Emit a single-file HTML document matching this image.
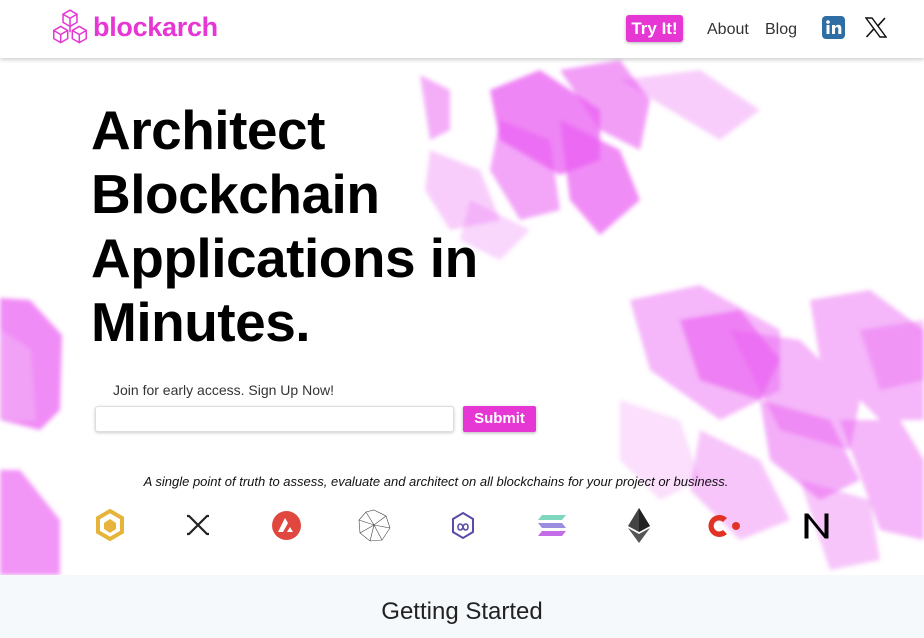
<!DOCTYPE html>
<html><head><meta charset="utf-8"><style>
*{margin:0;padding:0;box-sizing:border-box}
body{width:924px;height:638px;overflow:hidden;background:#fff;font-family:"Liberation Sans",sans-serif;position:relative}
.hdr{position:absolute;top:0;left:0;width:924px;height:58px;background:#fff;box-shadow:0 2px 4px rgba(0,0,0,.18);z-index:5}
.logo{position:absolute;left:93px;top:12px;font-size:27px;font-weight:bold;color:#e636d3;letter-spacing:-0.3px}
.try{position:absolute;left:626px;top:15px;width:57px;height:27px;background:#e636d3;color:#fff;font-weight:bold;font-size:17px;text-align:center;line-height:27px;border-radius:3px;box-shadow:0 1px 3px rgba(0,0,0,.3)}
.nav{position:absolute;top:21px;font-size:16px;color:#333}
.bg{position:absolute;left:0;top:58px;z-index:0}
h1{position:absolute;left:91px;top:98px;font-size:55px;line-height:64px;font-weight:bold;color:#000;z-index:2;letter-spacing:-0.5px}
.join{position:absolute;left:113px;top:382px;font-size:14px;color:#333;z-index:2}
.inp{position:absolute;left:95px;top:406px;width:359px;height:26px;border:1px solid #ddd;border-radius:3px;background:#fff;box-shadow:0 1px 3px rgba(0,0,0,.2);z-index:2}
.sub{position:absolute;left:463px;top:406px;width:73px;height:26px;background:#e636d3;color:#fff;font-weight:bold;font-size:15px;text-align:center;line-height:26px;border-radius:2px;box-shadow:0 1px 3px rgba(0,0,0,.3);z-index:2}
.tag{position:absolute;left:0;width:872px;text-align:center;top:474px;font-size:13px;font-style:italic;color:#111;z-index:2}
.gs{position:absolute;left:0;top:575px;width:924px;height:63px;background:#f5f9fc;text-align:center;font-size:24px;color:#222;padding-top:23px;z-index:3}
.ic{position:absolute;top:509px;z-index:2}
</style></head><body>
<svg class="bg" width="924" height="517" viewBox="0 58 924 517">
<defs><filter id="b"><feGaussianBlur stdDeviation="2"/></filter></defs>
<g filter="url(#b)" fill="#e95df2">
<polygon points="490,90 540,70 600,110 600,160 560,175 500,140" opacity=".75"/>
<polygon points="560,70 620,60 650,100 640,150 600,130" opacity=".6"/>
<polygon points="500,120 550,140 560,210 520,220 490,170" opacity=".55"/>
<polygon points="560,120 620,150 640,200 600,235 570,200" opacity=".7"/>
<polygon points="420,75 450,90 450,130 430,140" opacity=".5"/>
<polygon points="430,150 480,170 500,220 450,230 425,190" opacity=".3"/>
<polygon points="620,80 700,70 760,110 720,140" opacity=".3"/>
<polygon points="470,200 530,230 500,260 460,240" opacity=".25"/>
<polygon points="630,300 700,285 780,330 780,390 720,420 650,370" opacity=".45"/>
<polygon points="680,320 740,310 780,360 760,400 700,380" opacity=".6"/>
<polygon points="730,330 800,340 860,400 850,450 780,430" opacity=".45"/>
<polygon points="810,300 870,290 924,330 924,420 880,420 820,360" opacity=".45"/>
<polygon points="760,400 830,420 860,480 820,500 770,460" opacity=".5"/>
<polygon points="840,420 900,420 924,460 924,540 880,530" opacity=".45"/>
<polygon points="700,430 760,460 790,520 740,540 690,490" opacity=".35"/>
<polygon points="620,400 680,420 700,480 660,500 620,460" opacity=".2"/>
<polygon points="860,330 924,320 924,380 880,390" opacity=".35"/>
<polygon points="800,480 870,500 880,560 830,570" opacity=".35"/>
<polygon points="0,298 30,300 62,335 60,410 40,430 0,420" opacity=".7"/>
<polygon points="0,470 20,470 60,520 60,575 0,575" opacity=".65"/>
<polygon points="0,330 30,350 35,420 0,420" fill="#f3b0f7" opacity=".6"/>
</g>
</svg>
<div class="hdr">
<svg style="position:absolute;left:51px;top:9px" width="38" height="36" viewBox="2 0 32 31" fill="none" stroke="#e636d3" stroke-width="1.3">
<path d="M18 1l6 3.5v7L18 15l-6-3.5v-7z M12 4.5l6 3.5 6-3.5 M18 8v7"/>
<path d="M10 15l6 3.5v7L10 29l-6-3.5v-7z M4 18.5l6 3.5 6-3.5 M10 22v7"/>
<path d="M26 15l6 3.5v7L26 29l-6-3.5v-7z M20 18.5l6 3.5 6-3.5 M26 22v7"/>
<path d="M18 15v5"/>
</svg>
<div class="logo">blockarch</div>
<div class="try">Try It!</div>
<div class="nav" style="left:707px">About</div>
<div class="nav" style="left:765px">Blog</div>
<svg style="position:absolute;left:822px;top:16px" width="23" height="23" viewBox="0 0 23 23"><rect width="23" height="23" rx="4" fill="#2f6ea5"/><rect x="4.5" y="9" width="3" height="9" fill="#fff"/><circle cx="6" cy="6" r="1.8" fill="#fff"/><path d="M10 9h3v1.5c.8-1.2 2-1.8 3.3-1.8 2 0 3 1.3 3 3.8V18h-3v-5c0-1.2-.4-1.9-1.4-1.9S13 11.8 13 13v5h-3z" fill="#fff"/></svg>
<svg style="position:absolute;left:865px;top:17px" width="22" height="21" viewBox="0 0 22 21"><path d="M1 1h6l14 19h-6z" fill="none" stroke="#111" stroke-width="1.4"/><path d="M20 1L12.5 9.3M1.5 20l7.7-8.5" stroke="#111" stroke-width="1.6"/></svg>
</div>
<h1>Architect<br>Blockchain<br>Applications in<br>Minutes.</h1>
<div class="join">Join for early access. Sign Up Now!</div>
<div class="inp"></div>
<div class="sub">Submit</div>
<div class="tag">A single point of truth to assess, evaluate and architect on all blockchains for your project or business.</div>
<svg class="ic" style="left:95px" width="30" height="32" viewBox="0 0 30 32"><path d="M15 2l12 7v14l-12 7-12-7V9z" fill="none" stroke="#e6b43a" stroke-width="4"/><path d="M15 10l6 4v6l-6 4-6-4v-6z" fill="#e6b43a"/></svg>
<svg class="ic" style="left:185px;top:514px" width="26" height="22" viewBox="0 0 26 22"><path d="M2 2h2l18 18h2M2 20h2L22 2h2" fill="none" stroke="#222" stroke-width="2.2" stroke-linejoin="round"/></svg>
<svg class="ic" style="left:272px;top:511px" width="29" height="29" viewBox="0 0 29 29"><circle cx="14.5" cy="14.5" r="14.5" fill="#e0483f"/><path d="M13 7L6 21h5l5-9z M18 16l-3 5h6z" fill="#fff"/></svg>
<svg class="ic" style="left:358px;top:509px" width="33" height="33" viewBox="0 0 33 33" fill="none" stroke="#444" stroke-width=".6"><path d="M16 1l12 6 4 12-8 12-12 1L2 24 1 11 8 3z M8 3l8 13 12-9 M1 11l15 5 16 3 M2 24l14-8 8 15 M12 32l4-16"/></svg>
<svg class="ic" style="left:450px;top:511px" width="26" height="29" viewBox="0 0 26 29"><path d="M13 2l10 6v13l-10 6-10-6V8z" fill="none" stroke="#5b4ba8" stroke-width="2"/><path d="M8 16c0-4 4-4 5 0s5 4 5 0-4-4-5 0-5 4-5 0z" fill="none" stroke="#5b4ba8" stroke-width="1.6"/></svg>
<svg class="ic" style="left:538px;top:515px" width="28" height="22" viewBox="0 0 28 22"><path d="M4 0h24l-4 5H0z" fill="#7fd7c0"/><path d="M0 8h24l4 5H4z" fill="#9b8ee0"/><path d="M4 16h24l-4 5H0z" fill="#c56ce8"/></svg>
<svg class="ic" style="left:628px;top:508px" width="22" height="35" viewBox="0 0 22 35"><path d="M11 0L0 18l11 6 11-6z" fill="#444"/><path d="M11 0v24l11-6z" fill="#222"/><path d="M0 20l11 15 11-15-11 6z" fill="#555"/></svg>
<svg class="ic" style="left:705px;top:512px" width="38" height="28" viewBox="0 0 38 28"><path d="M22 6a11 11 0 1 0 0 16l-4-4a5.5 5.5 0 1 1 0-8z" fill="#e23226"/><circle cx="31" cy="14" r="4" fill="#e23226"/></svg>
<svg class="ic" style="left:802px;top:511px" width="29" height="29" viewBox="0 0 29 29"><path d="M3 27V3h3l17 21V3h3v24h-3L6 6v21z" fill="#000" stroke="#000" stroke-width="1"/></svg>
<div class="gs">Getting Started</div>
</body></html>
